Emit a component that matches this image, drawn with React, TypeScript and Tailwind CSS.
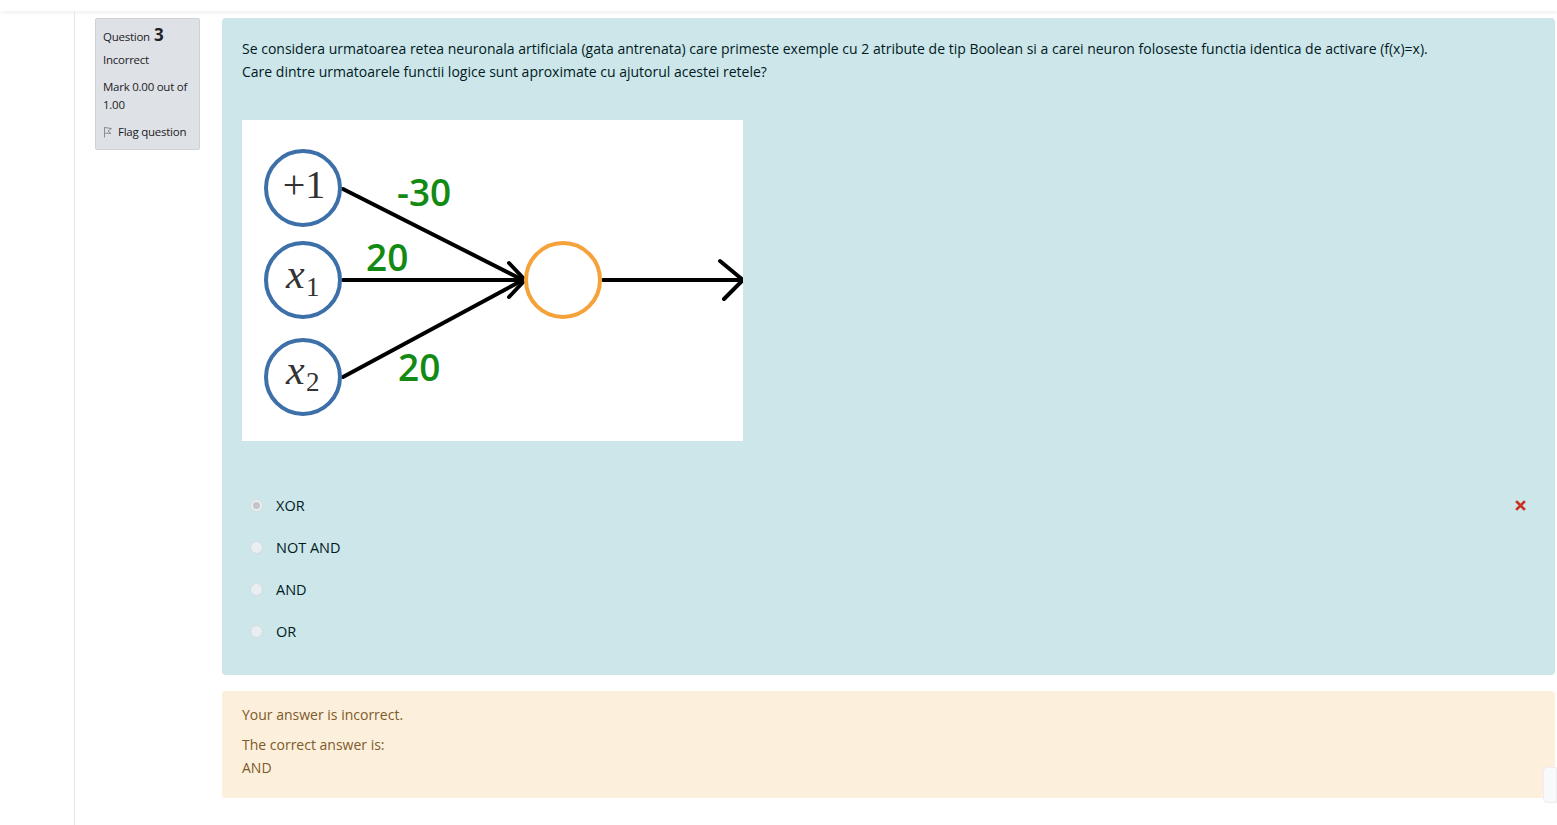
import React from 'react';

const answers = [
  { label: 'XOR', checked: true },
  { label: 'NOT AND', checked: false },
  { label: 'AND', checked: false },
  { label: 'OR', checked: false },
];

const NeuronDiagram: React.FC = () => (
  <svg width="501" height="321" viewBox="0 0 501 321" className="block bg-white">
    {/* edges */}
    <g stroke="#000" strokeWidth="4" strokeLinecap="round" fill="none">
      <line x1="101" y1="69" x2="281" y2="160" />
      <line x1="101" y1="160" x2="281" y2="160" />
      <line x1="101" y1="257" x2="281" y2="160" />
      <polyline points="267,143 283,160 267,177" />
      <line x1="361" y1="160" x2="499" y2="160" />
      <polyline points="478,141 501,160 482,179" />
    </g>
    {/* input nodes */}
    <g stroke="#3d6fa8" strokeWidth="4" fill="#fff">
      <circle cx="61" cy="68" r="37" />
      <circle cx="61" cy="160" r="37" />
      <circle cx="61" cy="257" r="37" />
    </g>
    <circle cx="321" cy="160" r="37" stroke="#f6a23b" strokeWidth="4" fill="#fff" />
    <g fill="#333" style={{ fontFamily: '"Liberation Serif", "DejaVu Serif", serif' }}>
      <text x="62" y="78" fontSize="40" textAnchor="middle">+1</text>
      <text x="44" y="168" fontSize="42" fontStyle="italic">x</text>
      <text x="64" y="176" fontSize="27">1</text>
      <text x="44" y="264" fontSize="42" fontStyle="italic">x</text>
      <text x="64" y="271" fontSize="27">2</text>
    </g>
    <g fill="#138a13" fontWeight="600" style={{ fontFamily: '"Open Sans", "Noto Sans", sans-serif' }}>
      <text x="155" y="86" fontSize="37">-30</text>
      <text x="124" y="151" fontSize="37">20</text>
      <text x="156" y="261" fontSize="37">20</text>
    </g>
  </svg>
);

const App: React.FC = () => {
  return (
    <div className="relative min-h-[825px] w-full overflow-hidden bg-white font-['Open_Sans',_'Noto_Sans',_sans-serif] text-[#1d2125]">
      {/* top header edge */}
      <div className="h-[11px] w-full bg-white shadow-[0_2px_4px_rgba(0,0,0,0.06)]"></div>

      <div className="flex">
        {/* left drawer edge */}
        <div className="w-[75px] shrink-0 border-r border-[#e3e6e9] min-h-[814px]"></div>

        <div className="flex flex-1 pt-[7px] pl-[20px] pr-[2px]">
          {/* question info */}
          <div className="w-[105px] shrink-0">
            <div className="rounded-[2px] border border-[#cdd1d6] bg-[#dee2e6] px-[7px] pt-[7px] pb-[8px] text-[11.5px] leading-[18px] tracking-[-0.25px]">
              <div className="flex items-baseline gap-[4px]">
                <span>Question</span>
                <span className="text-[17px] font-bold">3</span>
              </div>
              <div className="mt-[5px]">Incorrect</div>
              <div className="mt-[9px]">Mark 0.00 out of 1.00</div>
              <div className="mt-[9px] flex items-center gap-[5px]">
                <svg width="10" height="12" viewBox="0 0 10 12" fill="none" stroke="#8a8f94" strokeWidth="1">
                  <path d="M1.5 11.5V1" />
                  <path d="M1.5 1.5L8.5 2.5L5 5L8 7.5L1.5 7" />
                </svg>
                <span>Flag question</span>
              </div>
            </div>
          </div>

          {/* question body */}
          <div className="ml-[22px] flex flex-1 flex-col">
            <div className="rounded-[4px] bg-[#cde6ea] px-[20px] pt-[19px] pb-[23px] text-[14px] leading-[23px] text-[#001a1e]">
              <p>
                Se considera urmatoarea retea neuronala artificiala (gata antrenata) care primeste exemple cu 2 atribute de tip Boolean si a carei neuron foloseste functia identica de activare (f(x)=x).
                <br />
                Care dintre urmatoarele functii logice sunt aproximate cu ajutorul acestei retele?
              </p>
              <div className="mt-[37px]">
                <NeuronDiagram />
              </div>

              <div className="mt-[43px] flex flex-col">
                {answers.map((a, i) => (
                  <div key={i} className="flex h-[42px] items-center">
                    <div className="ml-[8px] flex h-[13px] w-[13px] items-center justify-center rounded-full border border-[#d5dadf] bg-[#e9eef0]">
                      {a.checked && <div className="h-[7px] w-[7px] rounded-full bg-[#c3c6c9]"></div>}
                    </div>
                    <span className="ml-[13px] text-[14.5px]">{a.label}</span>
                    {a.checked && (
                      <span className="ml-auto mr-[9px] text-[#ca3120]">
                        <svg width="11" height="11" viewBox="0 0 11 11">
                          <path d="M2 2L9 9M9 2L2 9" stroke="#ca3120" strokeWidth="2.6" strokeLinecap="square" />
                        </svg>
                      </span>
                    )}
                  </div>
                ))}
              </div>
            </div>

            <div className="mt-[16px] rounded-[4px] bg-[#fcefdc] px-[20px] pt-[12px] pb-[19px] text-[14px] leading-[23px] text-[#7d5a29]">
              <p>Your answer is incorrect.</p>
              <p className="mt-[7px]">The correct answer is:</p>
              <p>AND</p>
            </div>
          </div>
        </div>
      </div>

      {/* floating corner tab */}
      <div className="absolute right-0 top-[767px] h-[36px] w-[14px] rounded-l-[4px] border border-[#eceef0] bg-[#f8f9fa]"></div>
    </div>
  );
};

export default App;
